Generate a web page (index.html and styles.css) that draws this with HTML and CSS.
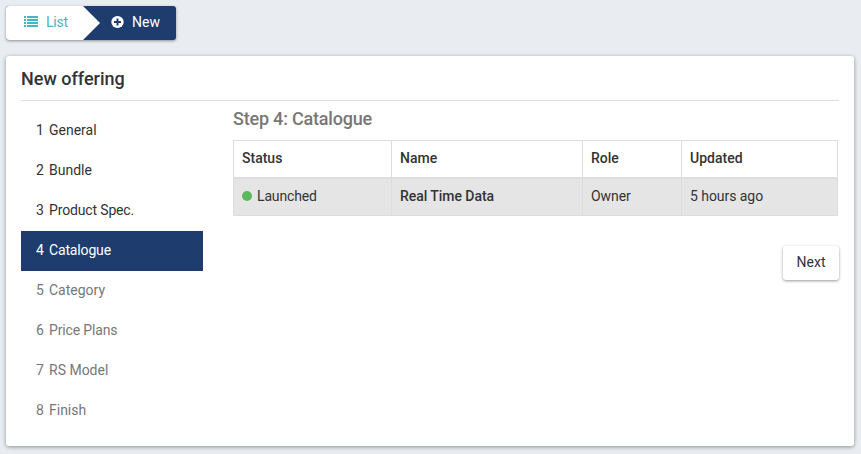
FILE: index.html
```html
<!DOCTYPE html>
<html lang="en">
<head>
<meta charset="utf-8">
<title>New offering</title>
<link rel="stylesheet" href="styles.css">
</head>
<body>
<nav class="crumbs">
  <a class="crumb crumb-list">
    <svg class="icon-list" width="14" height="12" viewBox="0 0 14 12" fill="currentColor"><path d="M0 0h2v2H0zM3 0h11v2H3zM0 3h2v2H0zM3 3h11v2H3zM0 6h2v2H0zM3 6h11v2H3zM0 9h2v2H0zM3 9h11v2H3z"/></svg>
    <span class="t-list">List</span>
  </a>
  <a class="crumb crumb-new">
    <svg class="icon-plus" width="13" height="12" viewBox="0 0 13 12"><ellipse cx="6.500" cy="6" rx="6.200" ry="6" fill="#fff"/><path d="M5.500 2.500h2V5H10v2H7.500v2.500h-2V7H3V5h2.500z" fill="#1e3c6e"/></svg>
    <span>New</span>
  </a>
</nav>
<main class="card">
  <h1 class="title">New offering</h1>
  <div class="content">
    <ol class="steps">
      <li class="step"><span class="num">1</span><span>General</span></li>
      <li class="step"><span class="num">2</span><span>Bundle</span></li>
      <li class="step"><span class="num">3</span><span class="tight">Product Spec.</span></li>
      <li class="step active"><span class="num">4</span><span class="tight">Catalogue</span></li>
      <li class="step disabled"><span class="num">5</span><span>Category</span></li>
      <li class="step disabled"><span class="num">6</span><span class="tight">Price Plans</span></li>
      <li class="step disabled"><span class="num">7</span><span>RS Model</span></li>
      <li class="step disabled"><span class="num">8</span><span>Finish</span></li>
    </ol>
    <section class="panel">
      <h2 class="subtitle">Step 4: Catalogue</h2>
      <table class="table">
        <colgroup><col class="c-status"><col class="c-name"><col class="c-role"><col class="c-updated"></colgroup>
        <thead><tr><th>Status</th><th>Name</th><th>Role</th><th>Updated</th></tr></thead>
        <tbody><tr><td><span class="dot"></span><span class="tight">Launched</span></td><td class="strong">Real Time Data</td><td>Owner</td><td>5 hours ago</td></tr></tbody>
      </table>
      <button class="next">Next</button>
    </section>
  </div>
</main>
</body>
</html>
```
FILE: styles.css
```css
* { box-sizing: border-box; }
body {
  margin: 0;
  padding: 6px 7px 8px 6px;
  height: 454px;
  overflow: hidden;
  background: #e9edf1;
  color: #333;
  font: 14px/20px Roboto, "Liberation Sans", sans-serif;
}
.crumbs {
  display: flex;
  width: 170px;
  height: 34px;
  border-radius: 3px;
  background: #1e3c6e;
  box-shadow: 0 1px 3px rgba(0, 0, 0, .4);
  overflow: hidden;
}
.crumb { display: flex; height: 34px; padding-bottom: 2px; align-items: center; }
.crumb-list {
  width: 94px;
  padding-left: 18px;
  background: #fff;
  color: #45b5c6;
  clip-path: polygon(0 0, 77px 0, 100% 50%, 77px 100%, 0 100%);
}
.icon-list { margin-right: 8px; }
.t-list { letter-spacing: -.2px; }
.crumb-new { padding-left: 11px; color: #fff; }
.icon-plus { margin-right: 8px; }
.card {
  height: 390px;
  margin-top: 16px;
  padding: 10px 15px 0;
  border-radius: 3px;
  background: #fff;
  box-shadow: 0 1px 4px rgba(0, 0, 0, .4);
}
.title {
  height: 35px;
  margin: 0;
  border-bottom: 1px solid #ddd;
  font-size: 18px;
  line-height: 25px;
  font-weight: 500;
}
.content { display: flex; gap: 30px; }
.steps { width: 182px; margin: 10px 0 0; padding: 0; list-style: none; }
.step { height: 40px; padding: 9px 15px; display: flex; }
.num { width: 13px; }
.tight { letter-spacing: -.15px; }
.active { background: #1e3c6e; color: #fff; }
.disabled { color: #777; }
.panel { width: 606px; display: flex; flex-direction: column; }
.subtitle { margin: 5px 0 9px; font-size: 18px; line-height: 25px; font-weight: 500; color: #777; letter-spacing: -.2px; }
.table { width: 605px; table-layout: fixed; border-collapse: collapse; }
.c-status { width: 158px; }
.c-name { width: 191px; }
.c-role { width: 99px; }
th, td { height: 38px; padding: 7px 8px 9px; border: 1px solid #ddd; text-align: left; white-space: nowrap; }
th { height: 37px; padding-bottom: 8px; border-bottom-width: 2px; font-weight: 500; }
td { background: #e5e5e5; letter-spacing: -.05px; }
.strong { font-weight: 500; }
.dot { display: inline-block; width: 10px; height: 10px; margin-right: 5px; border-radius: 50%; background: #5cb85c; vertical-align: 0; }
.next {
  align-self: flex-end;
  width: 56px;
  height: 34px;
  margin-top: 30px;
  padding: 0 0 2px;
  border: 0;
  border-radius: 3px;
  background: #fff;
  color: #333;
  font: inherit;
  box-shadow: 0 1px 3px rgba(0, 0, 0, .4);
}
```
